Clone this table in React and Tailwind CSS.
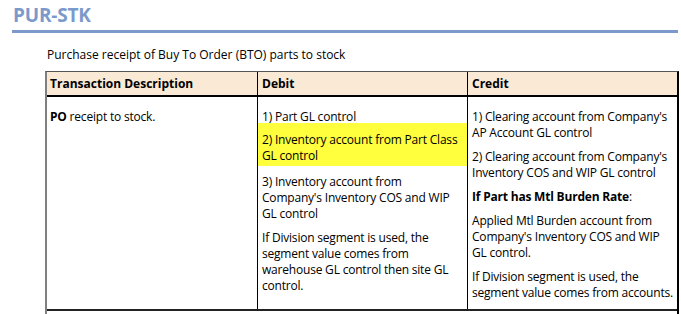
import React from "react";

const debit = [
	{ lines: ["1) Part GL control"] },
	{ lines: ["2) Inventory account from Part Class", "GL control"], mark: true },
	{ lines: ["3) Inventory account from", "Company's Inventory COS and WIP", "GL control"] },
	{
		lines: [
			"If Division segment is used, the",
			"segment value comes from",
			"warehouse GL control then site GL",
			"control.",
		],
	},
];

const Lines = ({ lines }) =>
	lines.map((l, i) => (
		<React.Fragment key={i}>
			{i > 0 && <br />}
			{l}
		</React.Fragment>
	));

const App = () => {
	return (
		<div
			className="w-[681px] h-[314px] overflow-hidden bg-white text-black"
			style={{ fontFamily: '"Open Sans", "Noto Sans", sans-serif' }}
		>
			<div className="px-3 pt-[3px]">
				<h1 className="text-[19px] font-bold leading-[24px] text-[#7b9acb] pl-[1px] tracking-[-0.2px]">PUR-STK</h1>
				<div className="mt-[3px] h-[3px] bg-[#7b9acb] w-[666px]" />
			</div>

			<p className="ml-[47px] mt-[14px] text-[12px] leading-[16px]">
				Purchase receipt of Buy To Order (BTO) parts to stock
			</p>

			<div className="ml-[45px] mt-[8px] w-[634px] border-l-2 border-l-[#808080] border-t border-t-[#555] border-r-2 border-r-black text-[12px] leading-[16px] whitespace-nowrap">
				<div className="grid grid-cols-[210px_210px_1fr] bg-[#f9e9d5] h-[25px] border-b-2 border-black font-bold">
					<div className="px-[3px] flex items-center">Transaction Description</div>
					<div className="px-1 flex items-center border-l border-black">Debit</div>
					<div className="px-1 flex items-center border-l border-black">Credit</div>
				</div>
				<div className="grid grid-cols-[210px_210px_1fr] h-[214px] border-b-2 border-[#222] tracking-[-0.2px]">
					<div className="px-[3px] pt-[12px]">
						<span className="font-bold">PO</span> receipt to stock.
					</div>
					<div className="border-l border-black pt-[12px] flex flex-col">
						{debit.map((p, i) =>
							p.mark ? (
								<div key={i} className="bg-[#ffff3d] px-1 -mt-[2px] pt-[9px] pb-[2px]">
									<Lines lines={p.lines} />
								</div>
							) : (
								<div key={i} className={`px-1 ${i === 0 ? "" : "mt-2"}`}>
									<Lines lines={p.lines} />
								</div>
							)
						)}
					</div>
					<div className="border-l border-black pt-[12px] px-1 flex flex-col gap-2">
						<div>
							<Lines lines={["1) Clearing account from Company's", "AP Account GL control"]} />
						</div>
						<div>
							<Lines lines={["2) Clearing account from Company's", "Inventory COS and WIP GL control"]} />
						</div>
						<div>
							<span className="font-bold">If Part has Mtl Burden Rate</span>:
						</div>
						<div>
							<Lines lines={["Applied Mtl Burden account from", "Company's Inventory COS and WIP", "GL control."]} />
						</div>
						<div>
							<Lines lines={["If Division segment is used, the", "segment value comes from accounts."]} />
						</div>
					</div>
				</div>
				<div className="h-4" />
			</div>
		</div>
	);
};

export default App;
